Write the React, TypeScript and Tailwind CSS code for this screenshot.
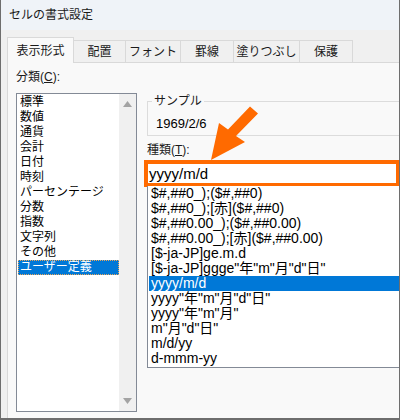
import React from 'react';

const font = "font-['Liberation_Sans','Noto_Sans_CJK_JP',sans-serif]";

const tabs = [
  { label: '配置', w: 'w-[52px]' },
  { label: 'フォント', w: 'w-[55px]' },
  { label: '罫線', w: 'w-[53px]' },
  { label: '塗りつぶし', w: 'w-[66px]' },
  { label: '保護', w: 'w-[53px]' },
];

const categories = [
  '標準',
  '数値',
  '通貨',
  '会計',
  '日付',
  '時刻',
  'パーセンテージ',
  '分数',
  '指数',
  '文字列',
  'その他',
  'ユーザー定義',
];

const formats = [
  '$#,##0_);($#,##0)',
  '$#,##0_);[赤]($#,##0)',
  '$#,##0.00_);($#,##0.00)',
  '$#,##0.00_);[赤]($#,##0.00)',
  '[$-ja-JP]ge.m.d',
  '[$-ja-JP]ggge"年"m"月"d"日"',
  'yyyy/m/d',
  'yyyy"年"m"月"d"日"',
  'yyyy"年"m"月"',
  'm"月"d"日"',
  'm/d/yy',
  'd-mmm-yy',
];

const App: React.FC = () => {
  return (
    <div
      className={`relative w-[400px] h-[420px] overflow-hidden flex flex-col bg-[#f0f0f0] border-l border-r border-b-2 border-[#6e6e6e] text-black ${font}`}
    >
      {/* title bar */}
      <div className="h-[30px] shrink-0 flex items-center px-[8px] bg-[#eff3f8] text-[12px] text-[#1a1a1a]">
        セルの書式設定
      </div>

      <div className="flex-1 flex flex-col pl-[6px] pt-[7px]">
        {/* tabs */}
        <div className="flex items-end h-[25px] text-[12px] text-[#1a1a1a]">
          <div className="relative z-10 w-[67px] h-[26px] -mb-px flex items-center justify-center bg-[#f9f9f9] border-t border-l border-r border-[#d9d9d9]">
            表示形式
          </div>
          {tabs.map((t) => (
            <div
              key={t.label}
              className={`${t.w} h-[22px] flex items-center justify-center bg-[#f0f0f0] border-t border-r border-[#d9d9d9]`}
            >
              {t.label}
            </div>
          ))}
        </div>

        {/* panel */}
        <div className="flex-1 flex gap-[10px] pl-[8px] pt-[6px] bg-[#f9f9f9] border-t border-l border-[#d9d9d9]">
          {/* category column */}
          <div className="w-[121px] shrink-0 flex flex-col">
            <div className="h-[16px] leading-[16px] text-[12px] text-[#1a1a1a]">
              分類(<span className="underline">C</span>):
            </div>
            <div className="mt-[8px] h-[319px] flex bg-white border border-[#838a96]">
              <div className="flex-1 pt-[1px] pl-[1px]">
                {categories.map((c, i) => (
                  <div
                    key={c}
                    className={`h-[15px] leading-[15px] text-[12px] pl-[2px] ${
                      i === categories.length - 1
                        ? 'bg-[#0078d7] text-white outline-1 outline-dotted outline-[#e9a65a] -outline-offset-1'
                        : ''
                    }`}
                  >
                    {c}
                  </div>
                ))}
              </div>
              <div className="w-[17px] flex flex-col justify-between items-center bg-[#f0f0f0] py-[7px]">
                <svg width="9" height="6" viewBox="0 0 9 6">
                  <polygon points="4.5,0 9,6 0,6" fill="#a3a3a3" />
                </svg>
                <svg width="9" height="6" viewBox="0 0 9 6">
                  <polygon points="0,0 9,0 4.5,6" fill="#a3a3a3" />
                </svg>
              </div>
            </div>
          </div>

          {/* format column */}
          <div className="flex-1 flex flex-col">
            <div className="mt-[32px] relative h-[35px] border border-[#dcdcdc] w-[280px]">
              <span className="absolute -top-[9px] left-[4px] px-[2px] bg-[#f9f9f9] text-[12px] leading-[16px] text-[#1a1a1a]">
                サンプル
              </span>
              <div className="pl-[8px] pt-[14px] text-[13px] leading-[15px]">1969/2/6</div>
            </div>
            <div className="mt-[6px] h-[16px] leading-[16px] text-[12px] text-[#1a1a1a]">
              種類(<span className="underline">T</span>):
            </div>
            <div className="mt-[2px] -ml-[3px] w-[256px] h-[27px] bg-white border-4 border-[#ff6a00] flex items-center pl-[1px] text-[15px] leading-[17px]">
              yyyy/m/d
            </div>
            <div className="-mt-px w-[280px] h-[182px] bg-white border border-[#838a96] border-t-0 pl-[1px]">
              {formats.map((f, i) => (
                <div
                  key={f}
                  className={`h-[15px] leading-[15px] text-[14px] pl-[2px] whitespace-nowrap ${
                    i === 6 ? 'bg-[#0078d7] text-white' : ''
                  }`}
                >
                  {f}
                </div>
              ))}
            </div>
          </div>
        </div>
      </div>

      {/* annotation arrow */}
      <svg
        className="absolute left-0 top-0 pointer-events-none"
        width="400"
        height="420"
        viewBox="0 0 400 420"
      >
        <polygon
          points="210,160 218,123 227,129.5 249,106.5 257,113.5 235,136 244,142"
          fill="#ff6a00"
        />
      </svg>
    </div>
  );
};

export default App;
